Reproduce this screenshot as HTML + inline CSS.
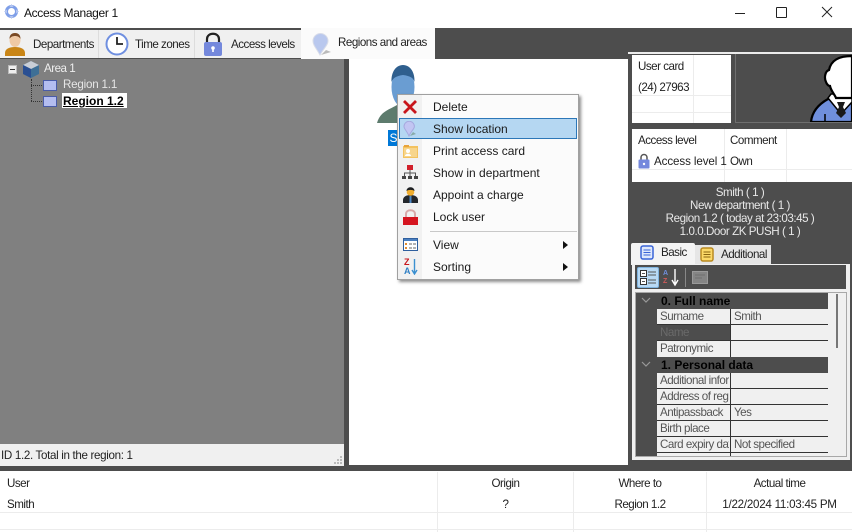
<!DOCTYPE html>
<html><head><meta charset="utf-8">
<style>
html,body{margin:0;padding:0;background:#fff}
#p{position:relative;width:852px;height:532px;overflow:hidden;background:#4d4d4d;font-family:"Liberation Sans",sans-serif;font-size:12px;color:#111}
#p div,#p span.a,#p svg{position:absolute}
.t{white-space:nowrap;line-height:14px;font-size:11.6px;letter-spacing:-.5px}
.tab{color:#222}
.m{left:433px;font-size:12px;color:#1a1a1a;white-space:nowrap;line-height:14px}
.gl{background:#ececec}
.pl{height:1px;background:#333}
.pn{left:660px;color:#555;white-space:nowrap;line-height:14px;font-size:11.6px;letter-spacing:-.5px}
.pv{left:734px;color:#555;white-space:nowrap;line-height:14px;font-size:11.6px;letter-spacing:-.5px}
</style></head><body><div id="p">
<!-- title bar -->
<div style="left:0;top:0;width:852px;height:28px;background:#fff"></div>
<svg style="left:4px;top:4px" width="15" height="15" viewBox="0 0 15 15"><circle cx="7.500" cy="7.500" r="5" fill="none" stroke="#7f9fe8" stroke-width="3"/><path d="M7.500 0l2 3h-4zM7.500 15l2-3h-4zM0 7.500l3-2v4zM15 7.500l-3-2v4z" fill="#b4c6f0"/></svg>
<div class="t" style="left:24px;top:6px;font-size:12px;letter-spacing:-.35px;color:#111">Access Manager 1</div>
<div style="left:735px;top:13px;width:10px;height:1px;background:#222"></div>
<div style="left:776px;top:7px;width:9px;height:9px;border:1px solid #222;border-radius:1px"></div>
<svg style="left:821px;top:6px" width="12" height="12" viewBox="0 0 12 12"><path d="M1 1l10 10M11 1L1 11" stroke="#222" stroke-width="1"/></svg>

<!-- tab strip -->
<div style="left:0;top:30px;width:301px;height:28px;background:#f0f0f0"></div>
<div style="left:98px;top:30px;width:1px;height:28px;background:#ddd"></div>
<div style="left:194px;top:30px;width:1px;height:28px;background:#ddd"></div>
<div style="left:301px;top:28px;width:134px;height:31px;background:#fbfbfb"></div>
<svg style="left:4px;top:32px" width="22" height="24" viewBox="0 0 22 24"><path d="M1 24v-3c0-4 4-6 10-6s10 2 10 6v3z" fill="#c98516"/><ellipse cx="11" cy="8" rx="5.500" ry="7" fill="#efc9a4"/><path d="M5.500 7c0-4 2-6 5.500-6s5.500 2 5.500 6c-1-2-3-3-5.500-3s-4.500 1-5.500 3z" fill="#7a4a24"/></svg>
<div class="t tab" style="left:33px;top:38px">Departments</div>
<svg style="left:105px;top:32px" width="24" height="24" viewBox="0 0 24 24"><circle cx="12" cy="12" r="10.500" fill="#fff" stroke="#6f8fe0" stroke-width="2"/><path d="M12 5v7h6" fill="none" stroke="#222" stroke-width="1.800"/></svg>
<div class="t tab" style="left:135px;top:38px">Time zones</div>
<svg style="left:203px;top:32px" width="20" height="24" viewBox="0 0 20 24"><path d="M4 11V7c0-7 12-7 12 0v4" fill="none" stroke="#222" stroke-width="2.200"/><rect x="1" y="10" width="18" height="14" rx="2" fill="#7488dc"/><circle cx="10" cy="16" r="1.800" fill="#fff"/><rect x="9.200" y="16" width="1.600" height="4" fill="#fff"/></svg>
<div class="t tab" style="left:231px;top:38px">Access levels</div>
<svg style="left:311px;top:32px" width="22" height="24" viewBox="0 0 22 24"><path d="M9 23C5 16 2 13 2 9a7.500 7.500 0 0 1 15 0c0 4-4 7-8 14z" fill="#b9c8ee" stroke="#d8dce8"/><path d="M10 23l10-3-5-2z" fill="#bbb"/></svg>
<div class="t tab" style="left:338px;top:36px">Regions and areas</div>

<!-- left panel -->
<div style="left:0;top:59px;width:344px;height:385px;background:#808080"></div>
<div style="left:8px;top:65px;width:7px;height:7px;background:#eee;border:1px solid #bbb"></div>
<div style="left:10px;top:69px;width:5px;height:1px;background:#333"></div>
<svg style="left:22px;top:60px" width="18" height="18" viewBox="0 0 18 18"><path d="M9 1l8 4v9l-8 4-8-4V5z" fill="#3e6f96"/><path d="M9 1l8 4-8 4-8-4z" fill="#c9ced6"/><path d="M1 5l8 4v9l-8-4z" fill="#2a4f92"/></svg>
<div class="t" style="left:44px;top:62px;color:#eee">Area 1</div>
<div style="left:31px;top:79px;width:0;height:22px;border-left:1px dotted #333"></div>
<div style="left:31px;top:85px;width:11px;border-top:1px dotted #333"></div>
<div style="left:31px;top:101px;width:11px;border-top:1px dotted #333"></div>
<div style="left:43px;top:80px;width:12px;height:9px;background:#b4bdf0;border:1px solid #4a5ca8"></div>
<div style="left:43px;top:96px;width:12px;height:9px;background:#b4bdf0;border:1px solid #4a5ca8"></div>
<div class="t" style="left:63px;top:78px;color:#e6e6e6;letter-spacing:-.2px">Region 1.1</div>
<div style="left:62px;top:93px;width:65px;height:15px;background:#fff"></div>
<div class="t" style="left:63px;top:94px;color:#000;font-weight:bold;text-decoration:underline;font-size:12px;letter-spacing:0">Region 1.2</div>

<!-- status bar -->
<div style="left:0;top:444px;width:344px;height:22px;background:#f0f0f0"></div>
<div class="t" style="left:1px;top:449px;color:#222;letter-spacing:-.33px">ID 1.2. Total in the region: 1</div>
<svg style="left:333px;top:455px" width="10" height="10"><path d="M7 1h2v2H7zM4 4h2v2H4zM7 4h2v2H7zM1 7h2v2H1zM4 7h2v2H4zM7 7h2v2H7z" fill="#bbb"/></svg>

<!-- center -->
<div style="left:349px;top:59px;width:279px;height:406px;background:#fff"></div>
<svg style="left:376px;top:65px" width="60" height="78" viewBox="0 0 60 78"><path d="M1 58c3-12 14-14 20-18h16c6 4 17 6 20 18z" fill="#5d7b6d"/><ellipse cx="27" cy="22" rx="11.500" ry="20" fill="#6a9dd2"/><path d="M15.500 17C15 7 20 0 27 0s12 7 11.500 17c-1-4-4-6-11.500-7-7 1-10 3-11.500 7z" fill="#2f5f8e"/></svg>
<div style="left:388px;top:130px;width:11px;height:16px;background:#0078d7;color:#fff;font-size:12px;line-height:16px;text-align:center">S</div>

<!-- context menu -->
<div style="left:397px;top:94px;width:182px;height:186px;background:#fbfbfb;border:1px solid #a0a0a0;box-sizing:border-box;box-shadow:2px 2px 3px rgba(0,0,0,.45)"></div>
<div style="left:398px;top:95px;width:24px;height:184px;background:#f1f1f1"></div>
<div style="left:399px;top:118px;width:178px;height:21px;background:#b5d7f2;border:1px solid #2c77b8;box-sizing:border-box"></div>
<svg style="left:402px;top:99px" width="16" height="16" viewBox="0 0 16 16"><path d="M2 2l12 12M14 2L2 14" stroke="#c8161c" stroke-width="2.800"/></svg>
<svg style="left:403px;top:121px" width="15" height="16" viewBox="0 0 15 16"><path d="M6 15C4 10 1 8 1 5.500a5.200 5.200 0 0 1 10.400 0C11.400 8 8 10 6 15z" fill="#c2c5f2" stroke="#a6a9de"/><path d="M7 15l6-2-3-2z" fill="#8aa"/></svg>
<svg style="left:403px;top:144px" width="15" height="14" viewBox="0 0 15 14"><rect x="0" y="2" width="15" height="12" fill="#f3c25f"/><rect x="1" y="1" width="5" height="2" fill="#e8a33a"/><rect x="1" y="4" width="13" height="9" fill="#f7d58c"/><circle cx="5" cy="7" r="2" fill="#fff"/><path d="M2 12c0-3 6-3 6 0z" fill="#fff"/></svg>
<svg style="left:402px;top:165px" width="16" height="15" viewBox="0 0 16 15"><rect x="5" y="0" width="6" height="5" fill="#d11f2a"/><path d="M8 5v3M2.500 11V8h11v3M8 8v3" stroke="#555" fill="none"/><rect x="0" y="11" width="4" height="3" fill="#444"/><rect x="6" y="11" width="4" height="3" fill="#444"/><rect x="12" y="11" width="4" height="3" fill="#444"/></svg>
<svg style="left:403px;top:187px" width="15" height="16" viewBox="0 0 15 16"><path d="M0 16v-3c0-3 3-5 7.500-5S15 10 15 13v3z" fill="#23262b"/><circle cx="7.500" cy="5" r="3.800" fill="#f0ae2f"/><path d="M3.500 4c0-5 8-5 8 0-2-1.500-6-1.500-8 0z" fill="#1d1f22"/><rect x="6.500" y="9" width="2" height="7" fill="#4b87c5"/></svg>
<svg style="left:403px;top:209px" width="15" height="16" viewBox="0 0 15 16"><path d="M3 8V5c0-5 9-5 9 0v3" fill="none" stroke="#d9a9a9" stroke-width="2"/><rect x="0" y="8" width="15" height="8" fill="#d5141f"/></svg>
<div class="m" style="top:100px">Delete</div>
<div class="m" style="top:122px">Show location</div>
<div class="m" style="top:144px">Print access card</div>
<div class="m" style="top:166px">Show in department</div>
<div class="m" style="top:188px">Appoint a charge</div>
<div class="m" style="top:210px">Lock user</div>
<div style="left:430px;top:231px;width:147px;height:1px;background:#c8c8c8"></div>
<svg style="left:403px;top:238px" width="15" height="13" viewBox="0 0 15 13"><rect x=".5" y=".5" width="14" height="12" fill="#fff" stroke="#2f5f9e"/><rect x="1" y="1" width="13" height="2" fill="#4a7fc0"/><path d="M2 5h2v2H2zM2 9h2v2H2z" fill="#e08a2e"/><path d="M6 6h3M10 6h3M6 10h3M10 10h3" stroke="#666"/></svg>
<div class="m" style="top:238px">View</div>
<svg style="left:563px;top:241px" width="5" height="8"><path d="M0 0l5 4-5 4z" fill="#111"/></svg>
<div class="t" style="left:404px;top:258px;font-size:9px;font-weight:bold;color:#c8161c;line-height:9px">Z</div>
<div class="t" style="left:404px;top:267px;font-size:9px;font-weight:bold;color:#2f7fc4;line-height:9px">A</div>
<svg style="left:411px;top:259px" width="7" height="16"><path d="M3.500 0v14M1 11l2.500 4 2.500-4" stroke="#3a8fd0" fill="none" stroke-width="1.400"/></svg>
<div class="m" style="top:260px">Sorting</div>
<svg style="left:563px;top:263px" width="5" height="8"><path d="M0 0l5 4-5 4z" fill="#111"/></svg>

<!-- right panel -->
<div style="left:628px;top:52px;width:224px;height:2px;background:#ececec"></div>
<div style="left:632px;top:55px;width:99px;height:68px;background:#fff"></div>
<div class="gl" style="left:693px;top:55px;width:1px;height:68px"></div>
<div class="gl" style="left:632px;top:95px;width:99px;height:1px"></div>
<div class="gl" style="left:632px;top:112px;width:99px;height:1px"></div>
<div class="t" style="left:638px;top:60px;color:#222">User card</div>
<div class="t" style="left:638px;top:81px;color:#222">(24) 27963</div>
<div style="left:735px;top:54px;width:117px;height:69px;background:#4d4d4d;border-left:1px solid #6f6f6f;border-bottom:1px solid #6f6f6f;box-sizing:border-box"></div>
<svg style="left:805px;top:54px" width="47" height="68" viewBox="0 0 47 68"><path d="M6 68C7 57 14 50 23 45L47 45V68Z" fill="#6f8fdc" stroke="#000" stroke-width="2.200"/><path d="M23 44L36 60L47 48V40H26Z" fill="#fff" stroke="#000" stroke-width="1.500"/><path d="M47 2C34 2 26 6 24 16C20 17 19 24 21 28C22 31 24 32 25 32C26 37 30 41 31 44L47 44Z" fill="#fff" stroke="#000" stroke-width="2.200"/><path d="M32 48L40 48L38 53L41 59L36 64L31 59L34 53Z" fill="#1a1a1a"/><path d="M20 60v8" stroke="#000" stroke-width="1.500"/></svg>

<div style="left:632px;top:129px;width:220px;height:53px;background:#fff"></div>
<div class="gl" style="left:724px;top:129px;width:1px;height:53px"></div>
<div class="gl" style="left:786px;top:129px;width:1px;height:53px"></div>
<div class="gl" style="left:632px;top:169px;width:220px;height:1px"></div>
<div class="t" style="left:638px;top:134px;color:#222">Access level</div>
<div class="t" style="left:730px;top:134px;color:#222">Comment</div>
<svg style="left:638px;top:153px" width="12" height="16" viewBox="0 0 12 16"><path d="M3 7V4.500c0-4 6-4 6 0V7" fill="none" stroke="#555" stroke-width="1.500"/><rect x="0.500" y="6.500" width="11" height="9" rx="1" fill="#7488dc"/><circle cx="6" cy="11" r="1.200" fill="#fff"/></svg>
<div class="t" style="left:654px;top:155px;color:#222;letter-spacing:-.1px">Access level 1</div>
<div class="t" style="left:730px;top:155px;color:#222">Own</div>

<div class="t" style="left:628px;width:224px;top:186px;text-align:center;color:#e8e8e8;letter-spacing:-.45px">Smith ( 1 )</div>
<div class="t" style="left:628px;width:224px;top:199px;text-align:center;color:#e8e8e8;letter-spacing:-.45px">New department ( 1 )</div>
<div class="t" style="left:628px;width:224px;top:212px;text-align:center;color:#e8e8e8;letter-spacing:-.45px">Region 1.2 ( today at 23:03:45 )</div>
<div class="t" style="left:628px;width:224px;top:225px;text-align:center;color:#e8e8e8;letter-spacing:-.45px">1.0.0.Door ZK PUSH ( 1 )</div>

<!-- tabs -->
<div style="left:631px;top:243px;width:64px;height:22px;background:#f4f4f4;border-radius:2px 2px 0 0"></div>
<div style="left:695px;top:245px;width:76px;height:20px;background:#e6e6e6"></div>
<div style="left:632px;top:264px;width:218px;height:196px;background:#f0f0f0"></div>
<svg style="left:640px;top:245px" width="14" height="15" viewBox="0 0 14 15"><rect x="1" y="1" width="12" height="13" rx="2" fill="#dfe8fb" stroke="#3a64d8" stroke-width="1.500"/><path d="M3.500 5h7M3.500 7.500h7M3.500 10h7" stroke="#3a64d8"/></svg>
<div class="t" style="left:661px;top:246px;color:#222">Basic</div>
<svg style="left:700px;top:247px" width="14" height="15" viewBox="0 0 14 15"><rect x="1" y="1" width="12" height="13" rx="2" fill="#fbd868" stroke="#b98a20" stroke-width="1.500"/><path d="M3.500 5h7M3.500 7.500h7M3.500 10h7" stroke="#8a6510"/></svg>
<div class="t" style="left:721px;top:248px;color:#222">Additional</div>

<!-- toolbar -->
<div style="left:635px;top:265px;width:211px;height:24px;background:#4d4d4d"></div>
<div style="left:637px;top:267px;width:22px;height:21px;background:#b8d9f4;border:1px solid #7fb3de;border-radius:2px;box-sizing:border-box"></div>
<svg style="left:640px;top:270px" width="17" height="16" viewBox="0 0 17 16"><rect x="0.500" y="0.500" width="6" height="6" fill="#fff" stroke="#333"/><rect x="0.500" y="8.500" width="6" height="6" fill="#fff" stroke="#333"/><path d="M2 3.500h3M2 11.500h3M8 2h8M8 5h8M8 10h8M8 13h8" stroke="#555"/></svg>
<div class="t" style="left:663px;top:270px;font-size:7px;line-height:7px;color:#6f8fdc;font-weight:bold">A</div>
<div class="t" style="left:663px;top:278px;font-size:7px;line-height:7px;color:#d05a5a;font-weight:bold">Z</div>
<svg style="left:671px;top:269px" width="8" height="18"><path d="M4 0v15M1 11l3 5 3-5" stroke="#fff" fill="none" stroke-width="1.400"/></svg>
<div style="left:685px;top:268px;width:1px;height:19px;background:#888"></div>
<svg style="left:692px;top:270px" width="16" height="14"><rect x=".5" y="1.500" width="15" height="12" fill="#858585" stroke="#9a9a9a"/><path d="M3 5h10M3 8h7" stroke="#6f6f6f"/></svg>

<!-- property grid -->
<div style="left:635px;top:292px;width:212px;height:165px;background:#f0f0f0;border:1px solid #a8a8a8;box-sizing:border-box"></div>
<div style="left:636px;top:293px;width:21px;height:163px;background:#4d4d4d"></div>
<div style="left:636px;top:293px;width:192px;height:16px;background:#4d4d4d"></div>
<div style="left:636px;top:357px;width:192px;height:16px;background:#4d4d4d"></div>
<div style="left:657px;top:325px;width:73px;height:16px;background:#4d4d4d"></div>
<svg style="left:641px;top:297px" width="10" height="7"><path d="M1 1l4 4 4-4" fill="none" stroke="#999" stroke-width="1.200"/></svg>
<svg style="left:641px;top:361px" width="10" height="7"><path d="M1 1l4 4 4-4" fill="none" stroke="#999" stroke-width="1.200"/></svg>
<div class="t" style="left:661px;top:294px;font-weight:bold;color:#000;font-size:12px;letter-spacing:0">0. Full name</div>
<div class="t" style="left:661px;top:358px;font-weight:bold;color:#000;font-size:12px;letter-spacing:0">1. Personal data</div>
<div class="pl" style="left:657px;top:324px;width:171px"></div>
<div class="pl" style="left:657px;top:340px;width:171px"></div>
<div class="pl" style="left:657px;top:388px;width:171px"></div>
<div class="pl" style="left:657px;top:404px;width:171px"></div>
<div class="pl" style="left:657px;top:420px;width:171px"></div>
<div class="pl" style="left:657px;top:436px;width:171px"></div>
<div class="pl" style="left:657px;top:452px;width:171px"></div>
<div style="left:730px;top:309px;width:1px;height:48px;background:#333"></div>
<div style="left:730px;top:373px;width:1px;height:83px;background:#333"></div>
<div class="pn" style="top:310px">Surname</div><div class="pv" style="top:310px">Smith</div>
<div class="pn" style="top:326px;color:#6a6a6a">Name</div>
<div class="pn" style="top:342px">Patronymic</div>
<div class="pn" style="top:374px;width:69px;overflow:hidden">Additional information</div>
<div class="pn" style="top:390px;width:69px;overflow:hidden">Address of registration</div>
<div class="pn" style="top:406px">Antipassback</div><div class="pv" style="top:406px">Yes</div>
<div class="pn" style="top:422px">Birth place</div>
<div class="pn" style="top:438px;width:69px;overflow:hidden">Card expiry date</div><div class="pv" style="top:438px">Not specified</div>
<div style="left:836px;top:294px;width:2px;height:54px;background:#777"></div>

<!-- bottom table -->
<div style="left:0;top:471px;width:852px;height:61px;background:#fff"></div>
<div class="gl" style="left:0;top:512px;width:852px;height:1px"></div>
<div class="gl" style="left:0;top:529px;width:852px;height:1px"></div>
<div class="gl" style="left:437px;top:472px;width:1px;height:60px"></div>
<div class="gl" style="left:573px;top:472px;width:1px;height:60px"></div>
<div class="gl" style="left:706px;top:472px;width:1px;height:60px"></div>
<div class="t" style="left:7px;top:477px;color:#222">User</div>
<div class="t" style="left:7px;top:498px;color:#222">Smith</div>
<div class="t" style="left:438px;width:135px;top:477px;text-align:center;color:#222">Origin</div>
<div class="t" style="left:438px;width:135px;top:498px;text-align:center;color:#222">?</div>
<div class="t" style="left:574px;width:132px;top:477px;text-align:center;color:#222">Where to</div>
<div class="t" style="left:574px;width:132px;top:498px;text-align:center;color:#222">Region 1.2</div>
<div class="t" style="left:707px;width:145px;top:477px;text-align:center;color:#222">Actual time</div>
<div class="t" style="left:707px;width:145px;top:498px;text-align:center;color:#222;letter-spacing:-.25px">1/22/2024 11:03:45 PM</div>
</div></body></html>
